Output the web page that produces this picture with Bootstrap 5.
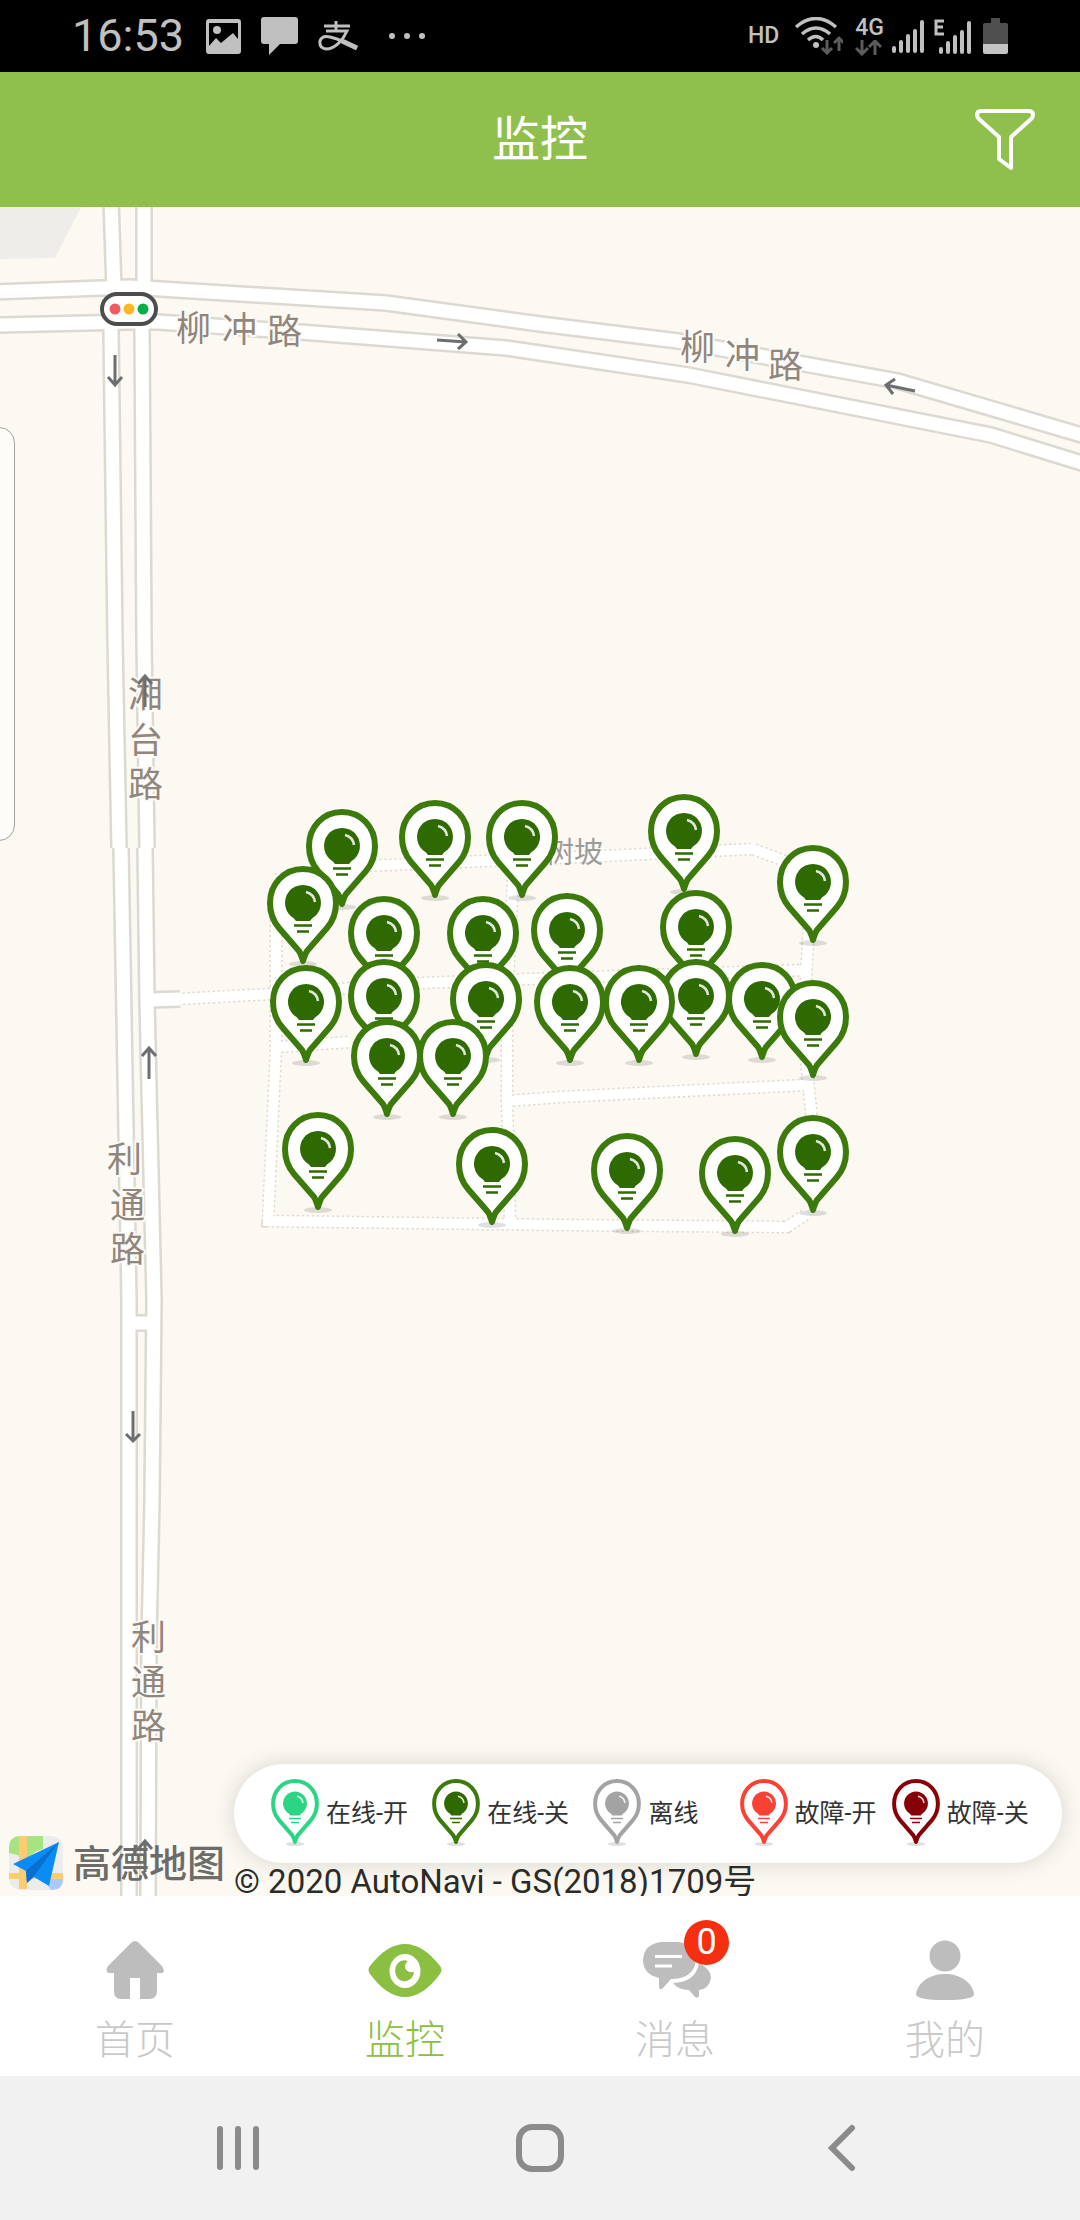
<!DOCTYPE html>
<html lang="zh-CN">
<head>
<meta charset="utf-8">
<meta name="viewport" content="width=device-width, initial-scale=1">
<title>监控</title>
<link href="https://cdn.jsdelivr.net/npm/bootstrap@5.3.0/dist/css/bootstrap.min.css" rel="stylesheet">
<style>
  body { font-family: Roboto, "Noto Sans CJK SC", sans-serif; background: #fff; }
  svg { display: block; flex: none; }
  .status-bar { height: 72px; padding: 0 72px; background: #000; color: #c0c0c0; }
  .clock { font-size: 45px; line-height: 72px; margin-right: 22px; }
  .notice-icons { gap: 20px; }
  .status-tag { font-size: 23px; line-height: 24px; font-weight: 500; }
  .signal-icons { gap: 12px; }
  .bar-icons { gap: 8px; }
  .app-header { height: 135px; background: #8fbf4d; }
  .app-title { font-size: 48px; line-height: 135px; font-weight: 400; color: #fff; }
  .filter-btn { right: 40px; }
  .map-area { background: #fcf9f3; }
  .road-edge { fill: none; stroke: #dcd9d1; stroke-width: 18; }
  .road-fill { fill: none; stroke: #fff; stroke-width: 13; }
  .path-edge { fill: none; stroke: #dcd6cf; stroke-width: 13; stroke-dasharray: 2 3; }
  .path-fill { fill: none; stroke: #fff; stroke-width: 10; }
  .road-name { font-size: 35px; fill: #8f867d; stroke: #fdfaf5; stroke-width: 4; paint-order: stroke; font-family: "Noto Sans CJK SC", sans-serif; }
  .place-name { font-size: 29px; fill: #9d9b98; font-family: "Noto Sans CJK SC", sans-serif; }
  .flow-arrow { fill: none; stroke: #6d6e70; stroke-width: 3; }
  .side-panel { left: -20px; top: 220px; width: 35px; height: 414px; border: 1px solid #a2a2a0; border-radius: 16px; background: #fefcf8; }
  .map-logo { left: 9px; bottom: 5px; gap: 9px; }
  .map-logo span { font-size: 38px; line-height: 54px; font-weight: 500; color: #6c6c6a; }
  .copyright { left: 234px; bottom: -4px; font-size: 33px; line-height: 36px; color: #2b2b29; white-space: nowrap; }
  .legend-box { left: 234px; right: 18px; bottom: 33px; height: 99px; padding-left: 36px; border-radius: 50px; background: #fff;
    display: grid; grid-template-columns: 161fr 161fr 146fr 152fr 171fr; align-items: center; box-shadow: 0 0 22px rgba(60, 70, 50, .2); }
  .legend-item { gap: 6px; font-size: 25px; line-height: 30px; color: #333; white-space: nowrap; }
  .pin-on { color: #2cd584; }
  .pin-off { color: #2f6a00; --pin-edge: #3c7a0b; }
  .pin-lost { color: #a3a3a3; }
  .pin-fault-on { color: #fb4034; }
  .pin-fault-off { color: #870008; }
  .tab-bar { height: 180px; background: #fff; }
  .tab-link { color: #c9c9c9; font-size: 40px; line-height: 48px; padding-top: 40px; gap: 17px; font-weight: 300; text-decoration: none; }
  .tab-link svg { color: #bdbdbd; }
  .tab-link.active, .tab-link.active svg { color: #8abf42; }
  .count-badge { left: 50%; margin-left: 9px; top: 24px; width: 45px; height: 45px; border-radius: 50%; background: #f52f10; color: #fff; font-size: 36px; line-height: 45px; font-weight: 400; }
  .system-nav { height: 144px; padding: 0 8%; background: #f1f1f1; }
</style>
<script src="https://cdn.jsdelivr.net/npm/bootstrap@5.3.0/dist/js/bootstrap.bundle.min.js"></script>
</head>
<body>
<svg width="0" height="0" class="position-absolute" aria-hidden="true">
  <defs>
    <symbol id="pin" viewBox="-37 0 74 104" overflow="visible">
      <ellipse cx="0" cy="98" rx="14" ry="3" fill="#000" opacity=".12"/>
      <path d="M0 3C-19 3-33 18-33 37C-33 47-30 55-24 62L-4 85Q-2 88 0 95Q2 88 4 85L24 62C30 55 33 47 33 37C33 18 19 3 0 3Z" fill="#fff" stroke="var(--pin-edge, currentColor)" stroke-width="6" stroke-linejoin="round"/>
      <path d="M-7 55L-9 52.500A18 18 0 1 1 9 52.500L7 55Z" fill="currentColor"/>
      <path d="M3 26Q11 28 12 36" fill="none" stroke="#fff" stroke-width="2.500" opacity=".85"/>
      <path d="M-9 59.500H9M-6 65.500H6" stroke="currentColor" stroke-width="2.500"/>
    </symbol>
    <g id="lamp"><use href="#pin" x="-37" y="0" width="74" height="104"/></g>
  </defs>
</svg>

<div class="d-flex flex-column min-vh-100">
  <div class="status-bar d-flex align-items-center justify-content-between">
    <div class="d-flex align-items-center">
      <span class="clock">16:53</span>
      <div class="notice-icons d-flex align-items-center">
        <svg width="35" height="35" viewBox="0 0 35 35"><path fill="currentColor" fill-rule="evenodd" d="M3 0H32Q35 0 35 3V32Q35 35 32 35H3Q0 35 0 32V3Q0 0 3 0ZM3 4V27L10 19L15 24L27 14L32 20V4Z"/><circle cx="11" cy="11" r="4" fill="currentColor"/></svg>
        <svg width="37" height="38" viewBox="0 0 37 38"><path fill="currentColor" d="M3 0H34Q37 0 37 3V24Q37 27 34 27H19L8 38V27H3Q0 27 0 24V3Q0 0 3 0Z"/></svg>
        <svg width="40" height="32" viewBox="0 0 40 32" fill="none" stroke="currentColor" stroke-width="3"><path d="M6 6H32M18 1V11M8 11H29C25 20 17 29 8 29Q1 28 2 21Q4 15 12 17Q24 20 39 28"/><path d="M24 21L39 28" stroke-width="5"/></svg>
        <svg width="48" height="8" viewBox="0 0 48 8" fill="currentColor"><circle cx="14" cy="4" r="3"/><circle cx="29" cy="4" r="3"/><circle cx="44" cy="4" r="3"/></svg>
      </div>
    </div>
    <div class="signal-icons d-flex align-items-center">
      <span class="status-tag">HD</span>
      <svg width="52" height="38" viewBox="-4 0 52 38" fill="none" stroke="currentColor" stroke-width="3.500"><path d="M1 10Q21-7 41 10M7 17Q21 5 35 17M13 23Q21 16 28 23"/><circle cx="21" cy="28" r="3" fill="currentColor" stroke="none"/><path stroke="#5c5c5c" stroke-width="3" d="M32 23V36M27 31L32 36L37 31M44 34V21M39 26L44 21L49 26"/></svg>
      <div class="bar-icons d-flex align-items-center">
        <div class="d-flex flex-column">
          <span class="status-tag">4G</span>
          <svg width="27" height="16" viewBox="0 0 27 16" fill="none" stroke="#5c5c5c" stroke-width="3"><path d="M7 0V14M1 8L7 14L13 8M20 15V1M14 7L20 1L26 7"/></svg>
        </div>
        <svg width="33" height="33" viewBox="0 0 33 33" stroke="currentColor" stroke-width="4" stroke-linecap="round"><path d="M2 28V31M9 22V31M16 16V31M23 11V31M30 2V31"/></svg>
        <svg width="38" height="35" viewBox="0 0 38 35" stroke="currentColor" stroke-width="4" stroke-linecap="round"><path d="M8 30V33M15 24V33M22 18V33M29 13V33M36 4V33"/><path d="M11 2H3V15H11M3 8H10" fill="none" stroke-width="3" stroke-linecap="butt"/></svg>
      </div>
      <svg width="25" height="36" viewBox="0 0 25 36"><path fill="#4f4f4f" d="M8 0H17V5H23Q25 5 25 7V26H0V7Q0 5 2 5H8Z"/><path fill="#c4c4c4" d="M0 26H25V34Q25 36 23 36H2Q0 36 0 34Z"/></svg>
    </div>
  </div>

  <header class="app-header position-relative d-flex align-items-center justify-content-center">
    <h1 class="app-title m-0">监控</h1>
    <button type="button" class="filter-btn btn p-0 border-0 position-absolute" aria-label="筛选">
      <svg width="70" height="64" viewBox="0 0 70 64" fill="none" stroke="#fff" stroke-width="4" stroke-linejoin="round"><path d="M11 3H59Q63 3 63 7Q63 9 61 11L41 29V60L29 51V29L9 11Q7 9 7 7Q7 3 11 3Z"/></svg>
    </button>
  </header>

  <main class="map-area flex-grow-1 position-relative overflow-hidden">
    <svg class="position-absolute w-100 h-100" viewBox="0 207 1080 1689" preserveAspectRatio="xMidYMid slice">
      <defs>
        <g id="side-paths">
          <path d="M276 900V1047L268 1221L560 1225L787 1227L808 1213"/>
          <path d="M276 880L342 867L435 863L603 856L753 849L785 861L811 890L806 978L805 1050L811 1110V1200"/>
          <path d="M178 999L272 994L420 983L530 979L806 970"/>
          <path d="M276 1047L350 1042"/>
          <path d="M514 860L507 1000V1100L510 1221"/>
          <path d="M508 1101L560 1097L806 1085"/>
        </g>
        <g id="main-roads">
          <path d="M111 200L114 290L111 330L115 640L119 848M121 848L126 1130L129 1300V1900"/>
          <path d="M144 200V290L142 330L144 640L147 848M145 848L147 1000L150 1130L154 1300L152 1500L149 1640L148 1900"/>
          <path d="M-5 292L129 287L386 303L540 324L678 341L898 381L1085 436"/>
          <path d="M-5 325L129 322L158 322L300 332L506 348L540 353L688 375L991 435L1085 464"/>
          <path d="M150 1000L180 999M128 1323H152"/>
        </g>
      </defs>
      <path d="M0 207H81L55 258L0 259Z" fill="#eeede9"/>
      <use href="#side-paths" class="path-edge"/>
      <use href="#side-paths" class="path-fill"/>
      <use href="#main-roads" class="road-edge"/>
      <use href="#main-roads" class="road-fill"/>

      <g class="road-name">
        <text x="176 222 267" y="341 342 344">柳冲路</text>
        <text x="680 725 768" y="360 368 378">柳冲路</text>
        <text x="128 128 128" y="707 753 797">湘台路</text>
        <text x="107 110 110" y="1172 1218 1262">利通路</text>
        <text x="131 131 131" y="1650 1695 1739">利通路</text>
      </g>
      <text class="place-name" x="545" y="863">树坡</text>

      <g class="flow-arrow">
        <path d="M115 355V385M108 377L115 385L122 377"/>
        <path d="M437 340L466 342M458 334L466 342L458 349"/>
        <path d="M915 391L886 385M895 379L886 385L893 394"/>
        <path d="M145 707V676M138 684L145 676L152 684"/>
        <path d="M149 1079V1048M142 1056L149 1048L156 1056"/>
        <path d="M133 1411V1441M126 1434L133 1441L140 1434"/>
        <path d="M145 1872V1841M138 1849L145 1841L152 1849"/>
      </g>

      <rect x="102" y="294" width="54" height="30" rx="15" fill="#fff" stroke="#4c4d4f" stroke-width="4"/>
      <circle cx="115" cy="309" r="5.500" fill="#ef5b63"/><circle cx="129" cy="309" r="5.500" fill="#fdb924"/><circle cx="143" cy="309" r="5.500" fill="#07ae43"/>

      <g class="pin-off">
        <use href="#lamp" x="684" y="794"/><use href="#lamp" x="435" y="800"/><use href="#lamp" x="522" y="800"/>
        <use href="#lamp" x="342" y="809"/><use href="#lamp" x="813" y="845"/><use href="#lamp" x="303" y="866"/>
        <use href="#lamp" x="696" y="890"/><use href="#lamp" x="567" y="893"/><use href="#lamp" x="384" y="896"/>
        <use href="#lamp" x="483" y="896"/><use href="#lamp" x="384" y="959"/><use href="#lamp" x="696" y="959"/>
        <use href="#lamp" x="486" y="962"/><use href="#lamp" x="762" y="962"/><use href="#lamp" x="306" y="965"/>
        <use href="#lamp" x="570" y="965"/><use href="#lamp" x="639" y="965"/><use href="#lamp" x="813" y="980"/>
        <use href="#lamp" x="387" y="1019"/><use href="#lamp" x="453" y="1019"/><use href="#lamp" x="318" y="1112"/>
        <use href="#lamp" x="813" y="1115"/><use href="#lamp" x="492" y="1127"/><use href="#lamp" x="627" y="1133"/>
        <use href="#lamp" x="735" y="1136"/>
      </g>
    </svg>

    <div class="side-panel position-absolute"></div>

    <div class="map-logo position-absolute d-flex align-items-center">
      <svg width="55" height="55" viewBox="0 0 55 55">
        <rect width="54" height="54" rx="12" fill="#ececea"/>
        <path d="M12 0H34V13Q24 15 21 22L0 17V12Q0 0 12 0Z" fill="#a9e381"/>
        <path d="M10 0H18V53H10ZM0 37H54V43H0Z" fill="#fdcb70"/>
        <path d="M39 43H54Q54 54 42 54Q38 50 39 43Z" fill="#a9cbfb"/>
        <path d="M50 6L4 28L17 35L18 47L25 41L40 50Z" fill="#0a8cf8"/>
        <path d="M50 6L17 35L18 47L25 40Z" fill="#0b6fd0"/>
      </svg>
      <span>高德地图</span>
    </div>

    <div class="legend-box position-absolute">
      <div class="legend-item d-flex align-items-center"><svg class="pin-on" width="50" height="69"><use href="#pin"/></svg><span>在线-开</span></div>
      <div class="legend-item d-flex align-items-center"><svg class="pin-off" width="50" height="69"><use href="#pin"/></svg><span>在线-关</span></div>
      <div class="legend-item d-flex align-items-center"><svg class="pin-lost" width="50" height="69"><use href="#pin"/></svg><span>离线</span></div>
      <div class="legend-item d-flex align-items-center"><svg class="pin-fault-on" width="50" height="69"><use href="#pin"/></svg><span>故障-开</span></div>
      <div class="legend-item d-flex align-items-center"><svg class="pin-fault-off" width="50" height="69"><use href="#pin"/></svg><span>故障-关</span></div>
    </div>

    <div class="copyright position-absolute">© 2020 AutoNavi - GS(2018)1709号</div>
  </main>

  <nav class="tab-bar d-flex">
    <a href="#" class="tab-link col d-flex flex-column align-items-center">
      <svg width="58" height="64" viewBox="0 0 58 64"><path fill="currentColor" d="M25 7Q29 3 33 7L56 30Q59 34 57 37H51V55Q51 63 43 63H34V42H24V63H15Q8 63 8 55V37H2Q-1 34 2 30Z"/></svg>
      <span>首页</span>
    </a>
    <a href="#" class="tab-link active col d-flex flex-column align-items-center" aria-current="page">
      <svg width="74" height="64" viewBox="0 0 74 64"><path fill="currentColor" d="M2 30Q19 8 37 8T72 30Q75 34 72 38Q55 61 37 61T2 38Q-1 34 2 30Z"/><ellipse cx="37" cy="35" rx="15.500" ry="17" fill="#fff"/><path fill="currentColor" d="M40 25A9.500 10.500 0 1 0 46 36Q37 37 37 30Q37 27 40 25Z"/></svg>
      <span>监控</span>
    </a>
    <a href="#" class="tab-link col position-relative d-flex flex-column align-items-center">
      <svg width="68" height="64" viewBox="-2 0 68 64" overflow="visible"><path fill="currentColor" d="M18 6H35Q53 8 53 24Q51 42 30 43H28L20 52Q17 55 16 51V42Q0 38 0 24Q1 8 18 6Z"/><path d="M12 20.500H39M12 30H29" stroke="#fff" stroke-width="3"/><path fill="currentColor" d="M30 47Q53 46 56 27Q68 33 68 42Q66 53 56 54V60Q55 63 52 61L46 54Q35 54 30 47Z"/></svg>
      <span>消息</span>
      <span class="count-badge position-absolute text-center">0</span>
    </a>
    <a href="#" class="tab-link col d-flex flex-column align-items-center">
      <svg width="58" height="64" viewBox="0 0 58 64" fill="currentColor"><circle cx="29" cy="20" r="15.500"/><path d="M29 38C44 38 56 46 58 58Q58 64 29 64T0 58C2 46 14 38 29 38Z"/></svg>
      <span>我的</span>
    </a>
  </nav>

  <div class="system-nav d-flex align-items-center">
    <button type="button" class="btn col p-0 border-0 d-flex justify-content-center" aria-label="最近任务"><svg width="44" height="48" viewBox="0 0 44 48" stroke="#8b8b8b" stroke-width="6" stroke-linecap="round"><path d="M4 5V43M22 5V43M40 5V43"/></svg></button>
    <button type="button" class="btn col p-0 border-0 d-flex justify-content-center" aria-label="主屏幕"><svg width="50" height="50" viewBox="0 0 50 50"><rect x="4" y="4" width="42" height="42" rx="13" fill="none" stroke="#8b8b8b" stroke-width="6"/></svg></button>
    <button type="button" class="btn col p-0 border-0 d-flex justify-content-center" aria-label="返回"><svg width="28" height="48" viewBox="0 0 28 48" fill="none" stroke="#8b8b8b" stroke-width="6" stroke-linecap="round"><path d="M24 4L4 24L24 44"/></svg></button>
  </div>
</div>
</body>
</html>
